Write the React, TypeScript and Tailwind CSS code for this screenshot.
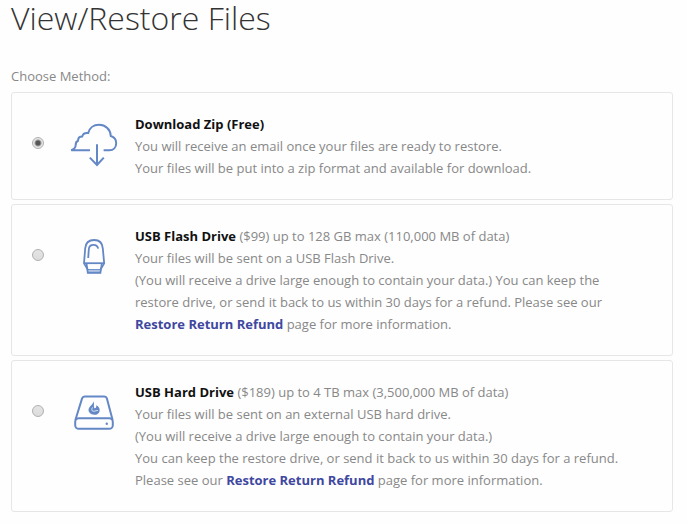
import { useState, type ReactNode } from 'react';

interface Method {
    id: string;
    icon: ReactNode;
    title: string;
    body: ReactNode;
}

const iconClass = 'w-12 h-12 shrink-0 mt-[7px] text-[#6488c6]';

function CloudIcon() {
    return (
        <svg viewBox="0 0 48 48" className={iconClass} fill="none" stroke="currentColor" strokeWidth="2" aria-hidden="true">
            <path d="M20 30.3H1.2C4 29.3 5.6 27.6 5.7 25C5.7 22.8 6.4 21.4 8 20.8C8 18 9.6 16.4 12.2 16.4C12.8 14 15 12.6 18.2 13C19.4 8 23.6 4.8 29 4.8C35.6 4.8 40.6 9.6 40.8 16C44.2 17 46.2 19.6 46.2 23.2C46.2 27.4 43.4 30.3 39.4 30.3H33.6" />
            <path d="M27 24.3V45M19.8 37.6L27 45L33.8 37.6" />
        </svg>
    );
}

function FlashIcon() {
    return (
        <svg viewBox="0 0 48 48" className={iconClass} fill="none" stroke="currentColor" strokeWidth="1.8" aria-hidden="true">
            <path d="M17.6 37.4L14 31.4L15.2 16.4C15.6 10.8 18.8 8 24.2 8S32.4 10.8 32.8 16.4L34.2 31.4L30.6 37.4" />
            <path d="M14 31.2H34.2" />
            <path d="M16.6 32L17.8 40.8H30.4L31.8 32" />
            <path d="M17.6 38.2H30.6V41.2H17.8Z" fill="currentColor" fillOpacity="0.6" stroke="none" />
            <path d="M17.6 37.6H30.6" strokeWidth="1" />
            <path d="M18.2 26L18.8 17.4C19 14.4 20.8 12.9 23.4 12.9C26 12.9 27.6 14 28.2 16.6" />
        </svg>
    );
}

function HardDriveIcon() {
    return (
        <svg viewBox="0 0 48 48" className={iconClass} fill="none" stroke="currentColor" strokeWidth="2" aria-hidden="true">
            <path d="M5.4 32L12 10.6C12.5 9 13.4 8.4 15 8.4H34C35.6 8.4 36.5 9 36.9 10.6L42.6 32" />
            <rect x="5.2" y="30.2" width="37.6" height="10.6" rx="3.6" />
            <circle cx="36.8" cy="35.8" r="1.2" fill="currentColor" stroke="none" />
            <path
                d="M23.6 13.2C24.6 16 23.2 18 24.4 20.2C25.8 20.4 26.6 19 26.2 17.2C28.8 18.4 30.2 20.8 29.6 23.2C28.8 26.2 25.6 27.4 23 26.6C19.6 26 17.8 23.4 18.8 20.6C19.8 17.8 22.8 16.8 23.6 13.2Z"
                fill="currentColor"
                stroke="none"
            />
            <path d="M22.6 19.4C21 21.6 21.8 23.4 24.2 23.2C25.6 23 26.8 22.2 28 22.6" stroke="#fefefe" strokeWidth="0.8" />
        </svg>
    );
}

function RefundLink() {
    return (
        <a href="#refund" className="font-bold text-[#3f47a0] hover:underline">
            Restore Return Refund
        </a>
    );
}

const methods: Method[] = [
    {
        id: 'zip',
        icon: <CloudIcon />,
        title: 'Download Zip (Free)',
        body: (
            <>
                <br />
                You will receive an email once your files are ready to restore.
                <br />
                Your files will be put into a zip format and available for download.
            </>
        ),
    },
    {
        id: 'flash',
        icon: <FlashIcon />,
        title: 'USB Flash Drive',
        body: (
            <>
                {' '}($99) up to 128 GB max (110,000 MB of data)
                <br />
                Your files will be sent on a USB Flash Drive.
                <br />
                (You will receive a drive large enough to contain your data.) You can keep the restore
                drive, or send it back to us within 30 days for a refund. Please see our{' '}
                <RefundLink /> page for more information.
            </>
        ),
    },
    {
        id: 'hard-drive',
        icon: <HardDriveIcon />,
        title: 'USB Hard Drive',
        body: (
            <>
                {' '}($189) up to 4 TB max (3,500,000 MB of data)
                <br />
                Your files will be sent on an external USB hard drive.
                <br />
                (You will receive a drive large enough to contain your data.)
                <br />
                You can keep the restore drive, or send it back to us within 30 days for a refund. Please
                see our <RefundLink /> page for more information.
            </>
        ),
    },
];

export default function App() {
    const [selected, setSelected] = useState('zip');

    return (
        <main className="min-h-screen bg-[#fefefe] pl-[11px] pr-[14px] pb-3 font-['Open_Sans',sans-serif] text-[13px] leading-[22px] text-[#888]">
            <h1 className="text-[32px] leading-9 font-light text-[#333]">View/Restore Files</h1>

            <fieldset className="mt-[29px]">
                <legend className="mb-[5px]">Choose Method:</legend>

                <div className="flex flex-col gap-1">
                    {methods.map((method) => (
                        <div key={method.id} className="flex items-start rounded-[3px] border border-[#e6e6e6] py-5 pr-10 pl-5">
                            <input
                                type="radio"
                                id={method.id}
                                name="method"
                                checked={selected === method.id}
                                onChange={() => setSelected(method.id)}
                                aria-labelledby={`${method.id}-title`}
                                className="mt-6 mr-[26px] size-3 shrink-0 appearance-none rounded-full border border-[#b0b0b0] bg-linear-to-b from-[#e4e4e4] to-[#dcdcdc] checked:bg-[radial-gradient(circle,#555_0_2px,#e6e6e6_4px)]"
                            />
                            {method.icon}
                            <p className="ml-[17px] min-w-0 flex-1">
                                <label htmlFor={method.id} id={`${method.id}-title`} className="font-bold text-[#111]">
                                    {method.title}
                                </label>
                                {method.body}
                            </p>
                        </div>
                    ))}
                </div>
            </fieldset>
        </main>
    );
}
